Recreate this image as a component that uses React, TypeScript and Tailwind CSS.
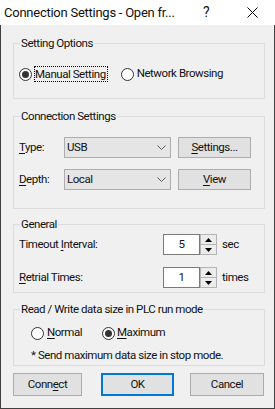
import type { ReactNode } from "react";

// Win32-style "Connection Settings" dialog

function Radio({ checked }: { checked?: boolean }) {
  return (
    <span className="flex h-[13px] w-[13px] shrink-0 items-center justify-center rounded-full border border-[#333333] bg-white">
      {checked && <span className="h-[7px] w-[7px] rounded-full bg-[#333333]" />}
    </span>
  );
}

function U({ children }: { children: ReactNode }) {
  return <span className="underline underline-offset-[2px]">{children}</span>;
}

function Group({
  title,
  className,
  children,
}: {
  title: string;
  className: string;
  children: ReactNode;
}) {
  return (
    <div className={`flex w-[252px] flex-col border border-[#dcdcdc] ${className}`}>
      <span className="-mt-[8px] ml-[6px] w-fit bg-[#f0f0f0] px-[1px] leading-[14px]">
        {title}
      </span>
      {children}
    </div>
  );
}

function Chevron() {
  return (
    <svg width="9" height="5" viewBox="0 0 9 5" className="shrink-0">
      <polyline points="0.5,0.5 4.5,4.5 8.5,0.5" fill="none" stroke="#5a5a5a" strokeWidth="1" />
    </svg>
  );
}

function Select({ value }: { value: string }) {
  return (
    <div className="flex h-[21px] w-[107px] items-center justify-between border border-[#adadad] bg-[#e5e5e5] pl-[2px] pr-[4px]">
      <span>{value}</span>
      <Chevron />
    </div>
  );
}

function Button({ children, className }: { children: ReactNode; className: string }) {
  return (
    <div className={`flex items-center justify-center bg-[#e1e1e1] ${className}`}>
      {children}
    </div>
  );
}

function Spin({ value }: { value: string }) {
  return (
    <div className="flex h-[21px]">
      <div className="flex w-[37px] items-center justify-center border border-[#7a7a7a] bg-white">
        {value}
      </div>
      <div className="flex w-[17px] flex-col">
        <div className="flex h-[11px] items-center justify-center border border-[#b4b4b4] bg-[#ececec]">
          <svg width="7" height="4" viewBox="0 0 7 4">
            <polygon points="3.5,0 7,4 0,4" fill="#000" />
          </svg>
        </div>
        <div className="flex h-[10px] items-center justify-center border border-t-0 border-[#b4b4b4] bg-[#ececec]">
          <svg width="7" height="4" viewBox="0 0 7 4">
            <polygon points="0,0 7,0 3.5,4" fill="#000" />
          </svg>
        </div>
      </div>
    </div>
  );
}

export default function App() {
  return (
    <div className="flex h-[409px] w-[275px] flex-col bg-[#f0f0f0] font-['Roboto',sans-serif] text-[11.5px] tracking-[-0.45px] text-[#111]">
      {/* Title bar */}
      <div className="flex h-[25px] shrink-0 items-center bg-white">
        <span className="flex-1 pl-[4px] text-[13px] tracking-[-0.25px]">
          Connection Settings - Open fr...
        </span>
        <span className="flex w-[46px] justify-center text-[14px]">?</span>
        <span className="flex w-[46px] justify-center">
          <svg width="11" height="11" viewBox="0 0 11 11">
            <path d="M0.5 0.5 L10.5 10.5 M10.5 0.5 L0.5 10.5" stroke="#000" strokeWidth="1" />
          </svg>
        </span>
      </div>

      <div className="flex flex-1 flex-col border-x border-b border-[#404040] pl-[12px] pr-[9px]">
        <Group title="Setting Options" className="mt-[18px] h-[56px]">
          <div className="mt-[16px] flex h-[16px] items-center">
            <span className="ml-[5px]">
              <Radio checked />
            </span>
            <span className="ml-[2px] border border-dotted border-black pr-[1px] leading-[14px]">
              Manual Setting
            </span>
            <span className="ml-[13px]">
              <Radio />
            </span>
            <span className="ml-[3px]">Network Browsing</span>
          </div>
        </Group>

        <Group title="Connection Settings" className="mt-[17px] h-[93px]">
          <div className="mt-[14px] flex h-[21px] items-center">
            <span className="ml-[5px] w-[45px]">
              <U>T</U>ype:
            </span>
            <Select value="USB" />
            <Button className="ml-[7px] h-[21px] w-[73px] border border-[#adadad]">
              <span>
                <U>S</U>ettings...
              </span>
            </Button>
          </div>
          <div className="mt-[11px] flex h-[21px] items-center">
            <span className="ml-[5px] w-[45px]">
              <U>D</U>epth:
            </span>
            <Select value="Local" />
            <Button className="ml-[7px] h-[21px] w-[73px] border border-[#adadad]">
              <span>
                <U>V</U>iew
              </span>
            </Button>
          </div>
        </Group>

        <Group title="General" className="mt-[15px] h-[69px]">
          <div className="mt-[3px] flex h-[21px] items-center">
            <span className="ml-[5px] w-[144px]">
              Timeout <U>I</U>nterval:
            </span>
            <Spin value="5" />
            <span className="ml-[5px]">sec</span>
          </div>
          <div className="mt-[12px] flex h-[21px] items-center">
            <span className="ml-[5px] w-[144px]">
              <U>R</U>etrial Times:
            </span>
            <Spin value="1" />
            <span className="ml-[5px]">times</span>
          </div>
        </Group>

        <Group title="Read / Write data size in PLC run mode" className="mt-[16px] h-[57px]">
          <div className="mt-[9px] flex h-[16px] items-center">
            <span className="ml-[17px]">
              <Radio />
            </span>
            <span className="ml-[3px] w-[55px]">
              <U>N</U>ormal
            </span>
            <Radio checked />
            <span className="ml-[2px]">
              <U>M</U>aximum
            </span>
          </div>
          <span className="ml-[17px] mt-[7px] leading-[14px]">
            * Send maximum data size in stop mode.
          </span>
        </Group>

        <div className="mt-[7px] flex h-[23px]">
          <Button className="w-[69px] border border-[#adadad]">
            <span>
              Conn<U>e</U>ct
            </span>
          </Button>
          <Button className="ml-[19px] w-[73px] border-2 border-[#0078d7]">OK</Button>
          <Button className="ml-[16px] w-[74px] border border-[#adadad]">Cancel</Button>
        </div>
      </div>
    </div>
  );
}
